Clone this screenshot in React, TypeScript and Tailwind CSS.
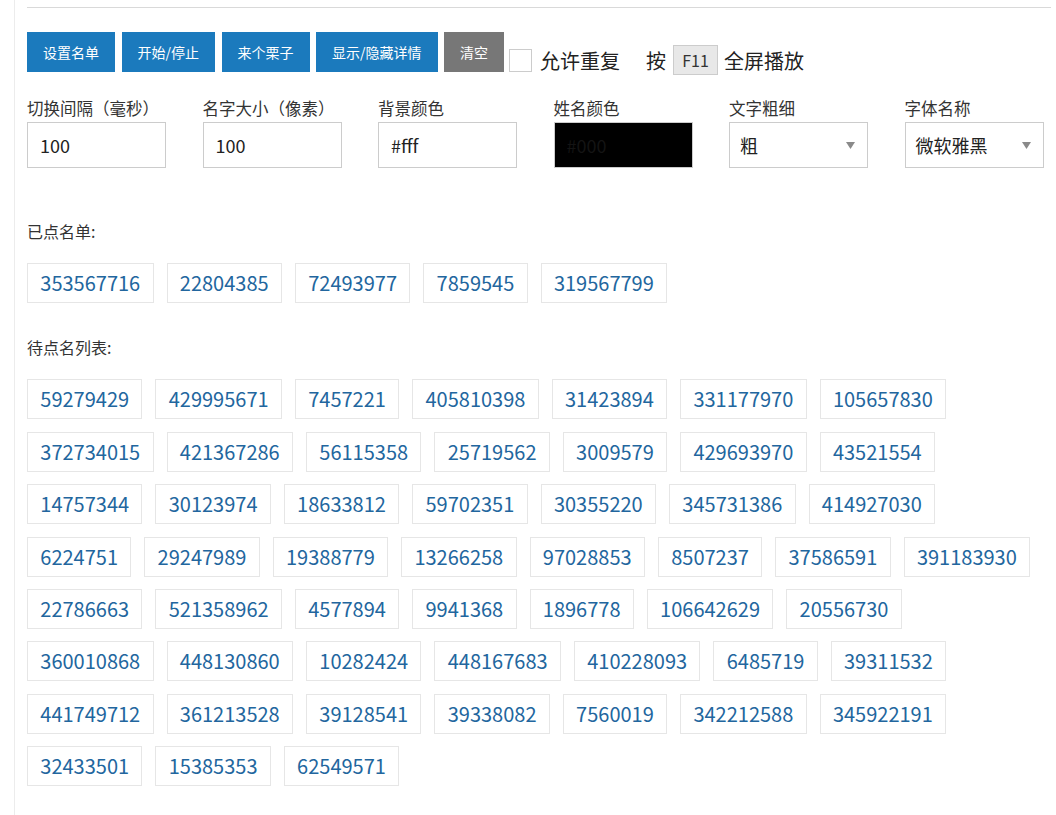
import React from "react";

const FONT = { fontFamily: '"Noto Sans CJK SC", "Noto Sans", sans-serif' };

const picked = ["353567716", "22804385", "72493977", "7859545", "319567799"];

const pending = [
  "59279429", "429995671", "7457221", "405810398", "31423894", "331177970", "105657830",
  "372734015", "421367286", "56115358", "25719562", "3009579", "429693970", "43521554",
  "14757344", "30123974", "18633812", "59702351", "30355220", "345731386", "414927030",
  "6224751", "29247989", "19388779", "13266258", "97028853", "8507237", "37586591", "391183930",
  "22786663", "521358962", "4577894", "9941368", "1896778", "106642629", "20556730",
  "360010868", "448130860", "10282424", "448167683", "410228093", "6485719", "39311532",
  "441749712", "361213528", "39128541", "39338082", "7560019", "342212588", "345922191",
  "32433501", "15385353", "62549571",
];

function Tag({ value }: { value: string }) {
  return (
    <span className="mr-[13px] mb-[12.4px] flex h-10 items-center border border-[#e6e6e6] px-[12.3px] text-[20px] text-[#22669e]">
      {value}
    </span>
  );
}

function Field({ label, children }: { label: string; children: React.ReactNode }) {
  return (
    <div className="w-[175.5px] shrink-0">
      <div className="h-[22px] text-[16.5px] leading-[22px] text-[#333]">{label}</div>
      <div className="mt-[3px]">{children}</div>
    </div>
  );
}

function TextBox({ value, dark }: { value: string; dark?: boolean }) {
  return (
    <div
      className={
        dark
          ? "flex h-[46px] w-[139px] items-center border border-[#ccc] bg-black px-3 text-[18px] text-[#141414]"
          : "flex h-[46px] w-[139px] items-center border border-[#ccc] bg-white px-3 text-[18px] text-[#222]"
      }
    >
      {value}
    </div>
  );
}

function SelectBox({ value }: { value: string }) {
  return (
    <div className="flex h-[46px] w-[139px] items-center justify-between border border-[#ccc] bg-white pl-[10px] pr-[12px] text-[18px] text-[#222]">
      <span>{value}</span>
      <svg width="9" height="7" viewBox="0 0 9 7">
        <path d="M0 0h9L4.5 7z" fill="#8a8a8a" />
      </svg>
    </div>
  );
}

export default function App() {
  return (
    <div className="min-h-screen bg-white pl-[14px]" style={FONT}>
      <div className="min-h-screen border-l border-[#ececec] pl-[12px] pt-[7px]">
        <div className="mr-[5px] border-t border-[#d9d9d9]" />

        {/* toolbar */}
        <div className="mt-[24px] flex items-end">
          <div className="flex gap-[6.5px]">
            {["设置名单", "开始/停止", "来个栗子", "显示/隐藏详情"].map((t) => (
              <button key={t} className="h-10 bg-[#1b7abd] px-4 text-[14px] text-white">
                {t}
              </button>
            ))}
            <button className="h-10 bg-[#777] px-4 text-[14px] text-white">清空</button>
          </div>
          <span className="ml-[5px] h-[23px] w-[23px] border border-[#ccc] bg-white" />
          <span className="ml-[8px] mb-[-1px] text-[20px] leading-[24px] text-[#222]">允许重复</span>
          <span className="ml-[26px] mb-[-1px] text-[20px] leading-[24px] text-[#222]">按</span>
          <span className="mb-[-3px] ml-[7px] flex h-[30px] w-[45px] items-center justify-center border border-[#ccc] bg-[#e8e8e8] text-[16px] text-[#333]">
            F11
          </span>
          <span className="ml-[6px] mb-[-1px] text-[20px] leading-[24px] text-[#222]">全屏播放</span>
        </div>

        {/* settings */}
        <div className="mt-[25px] flex">
          <Field label="切换间隔（毫秒）">
            <TextBox value="100" />
          </Field>
          <Field label="名字大小（像素）">
            <TextBox value="100" />
          </Field>
          <Field label="背景颜色">
            <TextBox value="#fff" />
          </Field>
          <Field label="姓名颜色">
            <TextBox value="#000" dark />
          </Field>
          <Field label="文字粗细">
            <SelectBox value="粗" />
          </Field>
          <Field label="字体名称">
            <SelectBox value="微软雅黑" />
          </Field>
        </div>

        <div className="mt-[53px] text-[16px] leading-[21px] text-[#333]">已点名单:</div>
        <div className="mt-[21px] flex w-[1022px] flex-wrap">
          {picked.map((v) => (
            <Tag key={v} value={v} />
          ))}
        </div>

        <div className="mt-[22px] text-[16px] leading-[21px] text-[#333]">待点名列表:</div>
        <div className="mt-[21px] flex w-[1022px] flex-wrap">
          {pending.map((v) => (
            <Tag key={v} value={v} />
          ))}
        </div>
      </div>
    </div>
  );
}
